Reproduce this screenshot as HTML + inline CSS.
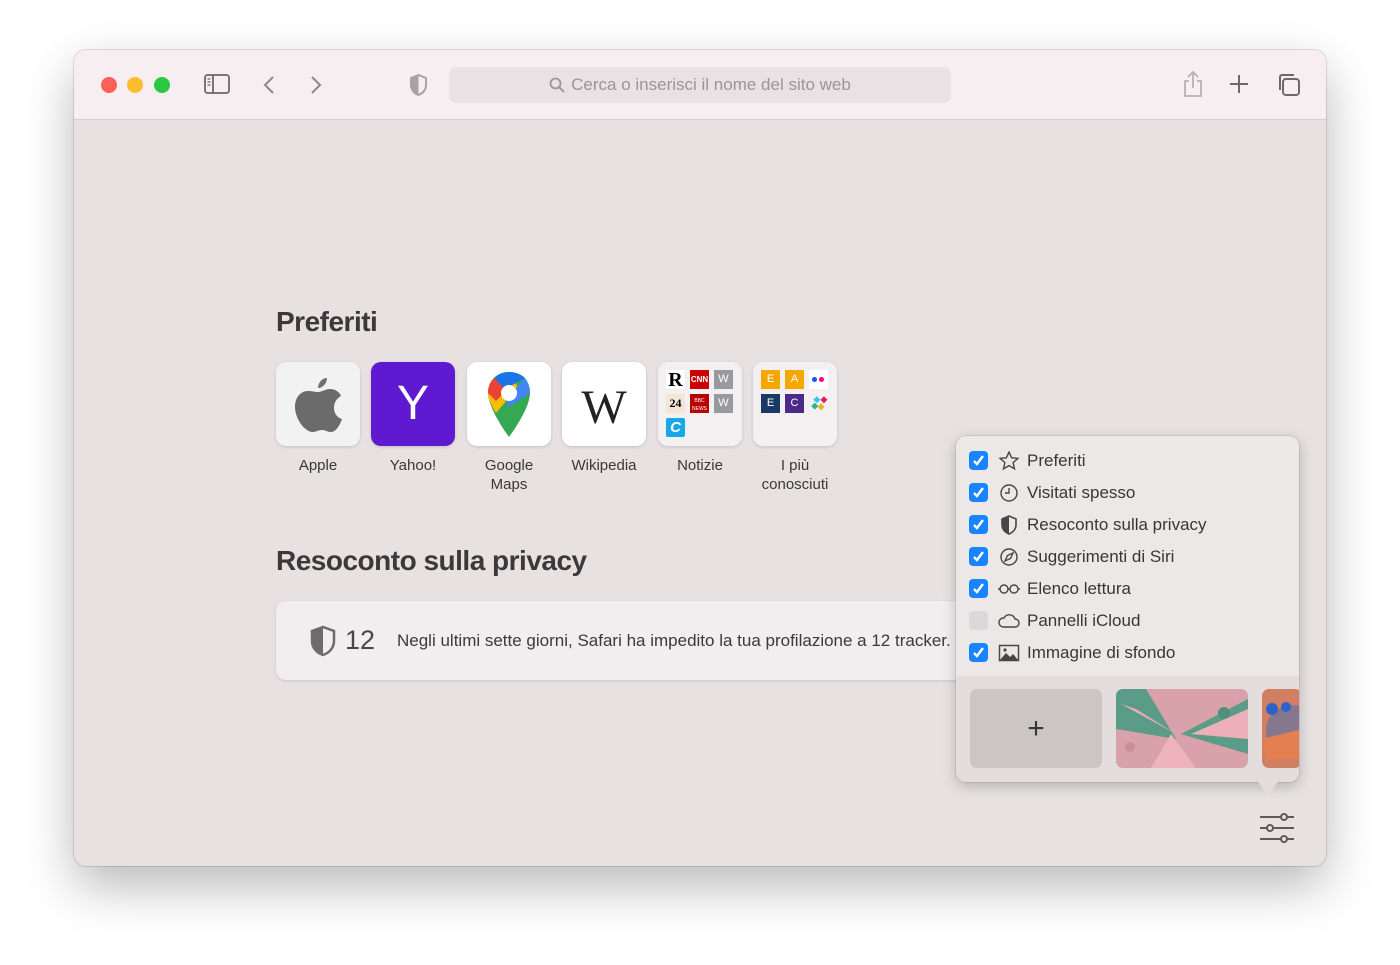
<!DOCTYPE html>
<html><head><meta charset="utf-8"><style>
*{box-sizing:border-box;margin:0;padding:0}
body{width:1400px;height:965px;background:#fff;font-family:"Liberation Sans",sans-serif;position:relative;overflow:hidden}
.win{position:absolute;left:74px;top:50px;width:1252px;height:816px;border-radius:12px;background:#e7e1e2;box-shadow:0 20px 50px rgba(0,0,0,.28),0 0 0 1px rgba(0,0,0,.12);overflow:hidden}
.tb{position:absolute;left:0;top:0;width:100%;height:70px;background:#f6eef0;border-bottom:1px solid #d6cfd1}
.dot{position:absolute;top:27px;width:16px;height:16px;border-radius:50%}
.url{position:absolute;left:375px;top:17px;width:502px;height:36px;background:#e9e1e3;border-radius:8px;color:#9b9597;font-size:17px;text-align:center;line-height:36px}
.h{position:absolute;left:202px;font-weight:bold;color:#3d393a;font-size:28px;letter-spacing:-.5px}
.fav{position:absolute;top:312px;width:84px;height:84px;border-radius:10px;background:#fff;box-shadow:0 1px 3px rgba(0,0,0,.15)}
.lab{position:absolute;top:406px;width:100px;text-align:center;font-size:15px;color:#3b3738;line-height:19px}
.card{position:absolute;left:202px;top:551px;width:720px;height:79px;background:#f2eeef;border-radius:10px;box-shadow:0 1px 3px rgba(0,0,0,.12)}
.pop{position:absolute;left:882px;top:386px;width:343px;height:346px;background:#ece8e8;border-radius:10px;box-shadow:0 4px 14px rgba(0,0,0,.22),0 0 0 1px rgba(0,0,0,.08)}
.row{position:absolute;left:13px;height:20px;font-size:17px;color:#3a3637;line-height:20px}
.cb{position:absolute;left:0;top:0;width:19px;height:19px;border-radius:4px;background:#1a84ff}
.cb svg{position:absolute;left:2px;top:2px}
.row .ic{position:absolute;left:28px;top:0;width:24px;height:20px}
.row span{position:absolute;left:58px;white-space:nowrap}
.t{position:absolute;width:6px;height:6px;border-radius:1px;color:#fff;font-size:11px;text-align:center;line-height:19px}
.m{position:absolute;width:19px;height:19px;font-size:11px;color:#fff;text-align:center;line-height:19px}
</style></head><body>
<div class="win">
<div class="tb">
<div class="dot" style="left:27px;background:#fe5f57"></div>
<div class="dot" style="left:53px;background:#febc2e"></div>
<div class="dot" style="left:80px;background:#28c840"></div>
<svg style="position:absolute;left:130px;top:24px" width="26" height="20" viewBox="0 0 26 20" fill="none" stroke="#6e6869" stroke-width="1.8"><rect x="1" y="1" width="24" height="18" rx="2.5"/><line x1="9" y1="1" x2="9" y2="19"/><path d="M3.5 5h3M3.5 8h3M3.5 11h3" stroke-width="1.2"/></svg>
<svg style="position:absolute;left:189px;top:25px" width="12" height="20" fill="none" stroke="#8e8889" stroke-width="2"><path d="M10 2L2 10l8 8"/></svg>
<svg style="position:absolute;left:236px;top:25px" width="12" height="20" fill="none" stroke="#8e8889" stroke-width="2"><path d="M2 2l8 8-8 8"/></svg>
<svg style="position:absolute;left:335px;top:24px" width="19" height="22" viewBox="0 0 19 22"><path d="M9.5 1L2 4v7c0 5 3.5 8.5 7.5 10 4-1.5 7.5-5 7.5-10V4z" fill="none" stroke="#a8a2a3" stroke-width="2"/><path d="M9.5 1L2 4v7c0 5 3.5 8.5 7.5 10z" fill="#a8a2a3"/></svg>
<div class="url"><svg style="vertical-align:-3px;margin-right:6px" width="16" height="16" fill="none" stroke="#9b9597" stroke-width="1.8"><circle cx="6.5" cy="6.5" r="5"/><path d="M10.5 10.5l4.5 4.5"/></svg>Cerca o inserisci il nome del sito web</div>
<svg style="position:absolute;left:1108px;top:20px" width="22" height="28" fill="none" stroke="#b7b1b2" stroke-width="1.8"><path d="M7 11H3v15h16V11h-4M11 2v16M6 7l5-5 5 5"/></svg>
<svg style="position:absolute;left:1155px;top:24px" width="20" height="20" stroke="#6e6869" stroke-width="2"><path d="M10 1v18M1 10h18"/></svg>
<svg style="position:absolute;left:1202px;top:22px" width="26" height="26" fill="none" stroke="#6e6869" stroke-width="2"><rect x="7" y="7" width="16" height="16" rx="3"/><path d="M4 18V5a2 2 0 0 1 2-2h12"/></svg>
</div>

<div class="h" style="top:256px">Preferiti</div>
<div class="fav" style="left:202px;background:#f2f2f2"><svg style="position:absolute;left:17px;top:12px" width="50" height="60" viewBox="0 0 50 60"><path d="M34 4c0 5-4 10-9 10 0-5 4-10 9-10z" fill="#707070"/><path d="M25 18c4 0 7-3 12-3 4 0 9 2 11 7-5 3-7 7-7 12 0 6 4 10 8 11-2 6-6 13-11 13-4 0-5-2-9-2s-6 2-9 2C11 58 2 44 2 33c0-10 6-16 13-16 4 0 7 1 10 1z" fill="#6b6b6b"/></svg></div>
<div class="fav" style="left:297px;background:#5f19d1"><div style="position:absolute;width:100%;top:14px;text-align:center;color:#fff;font-size:48px">Y</div></div>
<div class="fav" style="left:393px"><svg style="position:absolute;left:19px;top:8px" width="46" height="70" viewBox="0 0 46 70"><path d="M23 2C11 2 2 11 2 23c0 16 21 44 21 44s21-28 21-44C44 11 35 2 23 2z" fill="#34a853"/><path d="M2 23c0 6 4 14 8 20L32 17 23 2C11 2 2 11 2 23z" fill="#fbbc04"/><path d="M8 8C4 12 2 17 2 23l8 8 13-13z" fill="#ea4335"/><path d="M23 2c-6 0-11 2-15 6l11 11 20-11C35 4 29 2 23 2z" fill="#1a73e8"/><path d="M39 8L19 30l4 7 21-14c0-6-2-11-5-15z" fill="#4285f4"/><circle cx="23" cy="23" r="8" fill="#fff"/></svg></div>
<div class="fav" style="left:488px"><div style="position:absolute;width:100%;top:18px;text-align:center;color:#222;font-size:48px;font-family:'Liberation Serif',serif">W</div></div>
<div class="fav" style="left:584px;background:#f2f0f0">
<div class="m" style="left:8px;top:8px;background:#fff;color:#000;font:bold 20px 'Liberation Serif',serif;line-height:20px">R</div>
<div class="m" style="left:32px;top:8px;background:#cc0000;font-size:8px;font-weight:bold">CNN</div>
<div class="m" style="left:56px;top:8px;background:#999aa0">W</div>
<div class="m" style="left:8px;top:32px;background:#f3e6d6;color:#000;font:bold 12px 'Liberation Serif',serif;line-height:19px">24</div>
<div class="m" style="left:32px;top:32px;background:#b80000;font-size:5px;line-height:8px;padding-top:3px">BBC<br>NEWS</div>
<div class="m" style="left:56px;top:32px;background:#999aa0">W</div>
<div class="m" style="left:8px;top:56px;background:#18a7e8;font:bold italic 15px sans-serif;line-height:19px;border-radius:2px">C</div>
</div>
<div class="fav" style="left:679px;background:#f2f0f0">
<div class="m" style="left:8px;top:8px;background:#f5a700">E</div>
<div class="m" style="left:32px;top:8px;background:#f5a700">A</div>
<div class="m" style="left:56px;top:8px;background:#fff"><span style="position:absolute;left:3px;top:7px;width:5px;height:5px;border-radius:50%;background:#0063dc"></span><span style="position:absolute;left:10px;top:7px;width:5px;height:5px;border-radius:50%;background:#ff0084"></span></div>
<div class="m" style="left:8px;top:32px;background:#1a3a66">E</div>
<div class="m" style="left:32px;top:32px;background:#4b2a88">C</div>
<svg style="position:absolute;left:56px;top:32px" width="20" height="20"><rect x="8" y="1" width="5" height="5" fill="#e01e5a" transform="rotate(45 10 10)"/><rect x="3" y="6" width="5" height="5" fill="#36c5f0" transform="rotate(45 10 10)"/><rect x="11" y="8" width="5" height="5" fill="#ecb22e" transform="rotate(45 10 10)"/><rect x="6" y="12" width="5" height="5" fill="#2eb67d" transform="rotate(45 10 10)"/></svg>
</div>
<div class="lab" style="left:194px">Apple</div>
<div class="lab" style="left:289px">Yahoo!</div>
<div class="lab" style="left:385px">Google<br>Maps</div>
<div class="lab" style="left:480px">Wikipedia</div>
<div class="lab" style="left:576px">Notizie</div>
<div class="lab" style="left:671px">I più<br>conosciuti</div>

<div class="h" style="top:495px">Resoconto sulla privacy</div>
<div class="card">
<svg style="position:absolute;left:34px;top:24px" width="26" height="32" viewBox="0 0 26 32"><path d="M13 2L2 6v10c0 7 5 12 11 14 6-2 11-7 11-14V6z" fill="none" stroke="#6f6b6c" stroke-width="2.5"/><path d="M13 2L2 6v10c0 7 5 12 11 14z" fill="#6f6b6c"/></svg>
<div style="position:absolute;left:69px;top:24px;font-size:27px;color:#4a4647">12</div>
<div style="position:absolute;left:121px;top:30px;font-size:17px;color:#3d393a;white-space:nowrap">Negli ultimi sette giorni, Safari ha impedito la tua profilazione a 12 tracker.</div>
</div>

<div class="pop">
<div class="row" style="top:15px"><div class="cb"><svg width="15" height="15" fill="none" stroke="#fff" stroke-width="2.4"><path d="M3 8l3 3 6-8"/></svg></div><svg class="ic" viewBox="0 0 24 20" fill="none" stroke="#4a4647" stroke-width="1.4"><path d="M12 1l2.6 5.8 6.3.6-4.8 4.2 1.4 6.2L12 14.6 6.5 17.8l1.4-6.2L3.1 7.4l6.3-.6z"/></svg><span>Preferiti</span></div>
<div class="row" style="top:47px"><div class="cb"><svg width="15" height="15" fill="none" stroke="#fff" stroke-width="2.4"><path d="M3 8l3 3 6-8"/></svg></div><svg class="ic" viewBox="0 0 24 20" fill="none" stroke="#4a4647" stroke-width="1.4"><circle cx="12" cy="10" r="8"/><path d="M12 5v5H8"/></svg><span>Visitati spesso</span></div>
<div class="row" style="top:79px"><div class="cb"><svg width="15" height="15" fill="none" stroke="#fff" stroke-width="2.4"><path d="M3 8l3 3 6-8"/></svg></div><svg class="ic" viewBox="0 0 24 20"><path d="M12 1L5 4v6c0 4 3 7.5 7 9 4-1.5 7-5 7-9V4z" fill="none" stroke="#4a4647" stroke-width="1.6"/><path d="M12 1L5 4v6c0 4 3 7.5 7 9z" fill="#4a4647"/></svg><span>Resoconto sulla privacy</span></div>
<div class="row" style="top:111px"><div class="cb"><svg width="15" height="15" fill="none" stroke="#fff" stroke-width="2.4"><path d="M3 8l3 3 6-8"/></svg></div><svg class="ic" viewBox="0 0 24 20" fill="none" stroke="#4a4647" stroke-width="1.4"><circle cx="12" cy="10" r="8"/><path d="M16 6l-5.5 2.5L8 14l5.5-2.5z"/></svg><span>Suggerimenti di Siri</span></div>
<div class="row" style="top:143px"><div class="cb"><svg width="15" height="15" fill="none" stroke="#fff" stroke-width="2.4"><path d="M3 8l3 3 6-8"/></svg></div><svg class="ic" viewBox="0 0 24 20" fill="none" stroke="#4a4647" stroke-width="1.4"><circle cx="7" cy="10" r="4"/><circle cx="17" cy="10" r="4"/><path d="M11 10h2M1 10h2M21 10h2"/></svg><span>Elenco lettura</span></div>
<div class="row" style="top:175px"><div class="cb" style="background:#dcd7d8"></div><svg class="ic" viewBox="0 0 24 20" fill="none" stroke="#4a4647" stroke-width="1.4"><path d="M6 16h12a4 4 0 0 0 0-8 6 6 0 0 0-11-1 4.5 4.5 0 0 0-1 9z"/></svg><span>Pannelli iCloud</span></div>
<div class="row" style="top:207px"><div class="cb"><svg width="15" height="15" fill="none" stroke="#fff" stroke-width="2.4"><path d="M3 8l3 3 6-8"/></svg></div><svg class="ic" viewBox="0 0 24 20"><rect x="2.5" y="2.5" width="19" height="15" fill="none" stroke="#4a4647" stroke-width="1.5"/><path d="M3 17l6-7 4 4 3-3 5 6z" fill="#4a4647"/><circle cx="8" cy="7" r="1.6" fill="#4a4647"/></svg><span>Immagine di sfondo</span></div>
<div style="position:absolute;left:0;top:240px;width:343px;height:106px;background:#e3dddd;border-radius:0 0 10px 10px;overflow:hidden">
<div style="position:absolute;left:14px;top:13px;width:132px;height:79px;border-radius:7px;background:#cbc6c4;text-align:center;line-height:79px;font-size:30px;color:#3a3637">+</div>
<svg style="position:absolute;left:160px;top:13px;border-radius:7px" width="132" height="79" viewBox="0 0 132 79"><rect width="132" height="79" fill="#d9a1aa"/><path d="M0 0h30l30 50L0 40z" fill="#5a9c88"/><path d="M5 15l55 30L20 20z" fill="#e9aab3"/><path d="M132 10L65 45l67 20z" fill="#5a9c88"/><path d="M75 45l57-25v30z" fill="#eeb0b8"/><path d="M55 45L35 79h45z" fill="#eeb3bb"/><circle cx="14" cy="58" r="5" fill="#c98e97"/><circle cx="108" cy="24" r="6" fill="#4f8f7b"/></svg>
<svg style="position:absolute;left:306px;top:13px" width="40" height="79"><rect width="40" height="79" rx="7" fill="#d07f63"/><circle cx="30" cy="42" r="26" fill="#86768e"/><path d="M0 50l40-10v30H5z" fill="#e48050"/><circle cx="10" cy="20" r="6" fill="#2d63c8"/><circle cx="24" cy="18" r="5" fill="#2d63c8"/></svg>
</div>
</div>
<div style="position:absolute;left:1183px;top:730px;width:0;height:0;border-left:11px solid transparent;border-right:11px solid transparent;border-top:16px solid #e3dddd"></div>
<svg style="position:absolute;left:1185px;top:762px" width="36" height="32" fill="none" stroke="#5f5b5c" stroke-width="2"><path d="M1 5h34M1 16h34M1 27h34"/><circle cx="25" cy="5" r="3" fill="#e7e1e2"/><circle cx="11" cy="16" r="3" fill="#e7e1e2"/><circle cx="25" cy="27" r="3" fill="#e7e1e2"/></svg>
</div>
</body></html>
